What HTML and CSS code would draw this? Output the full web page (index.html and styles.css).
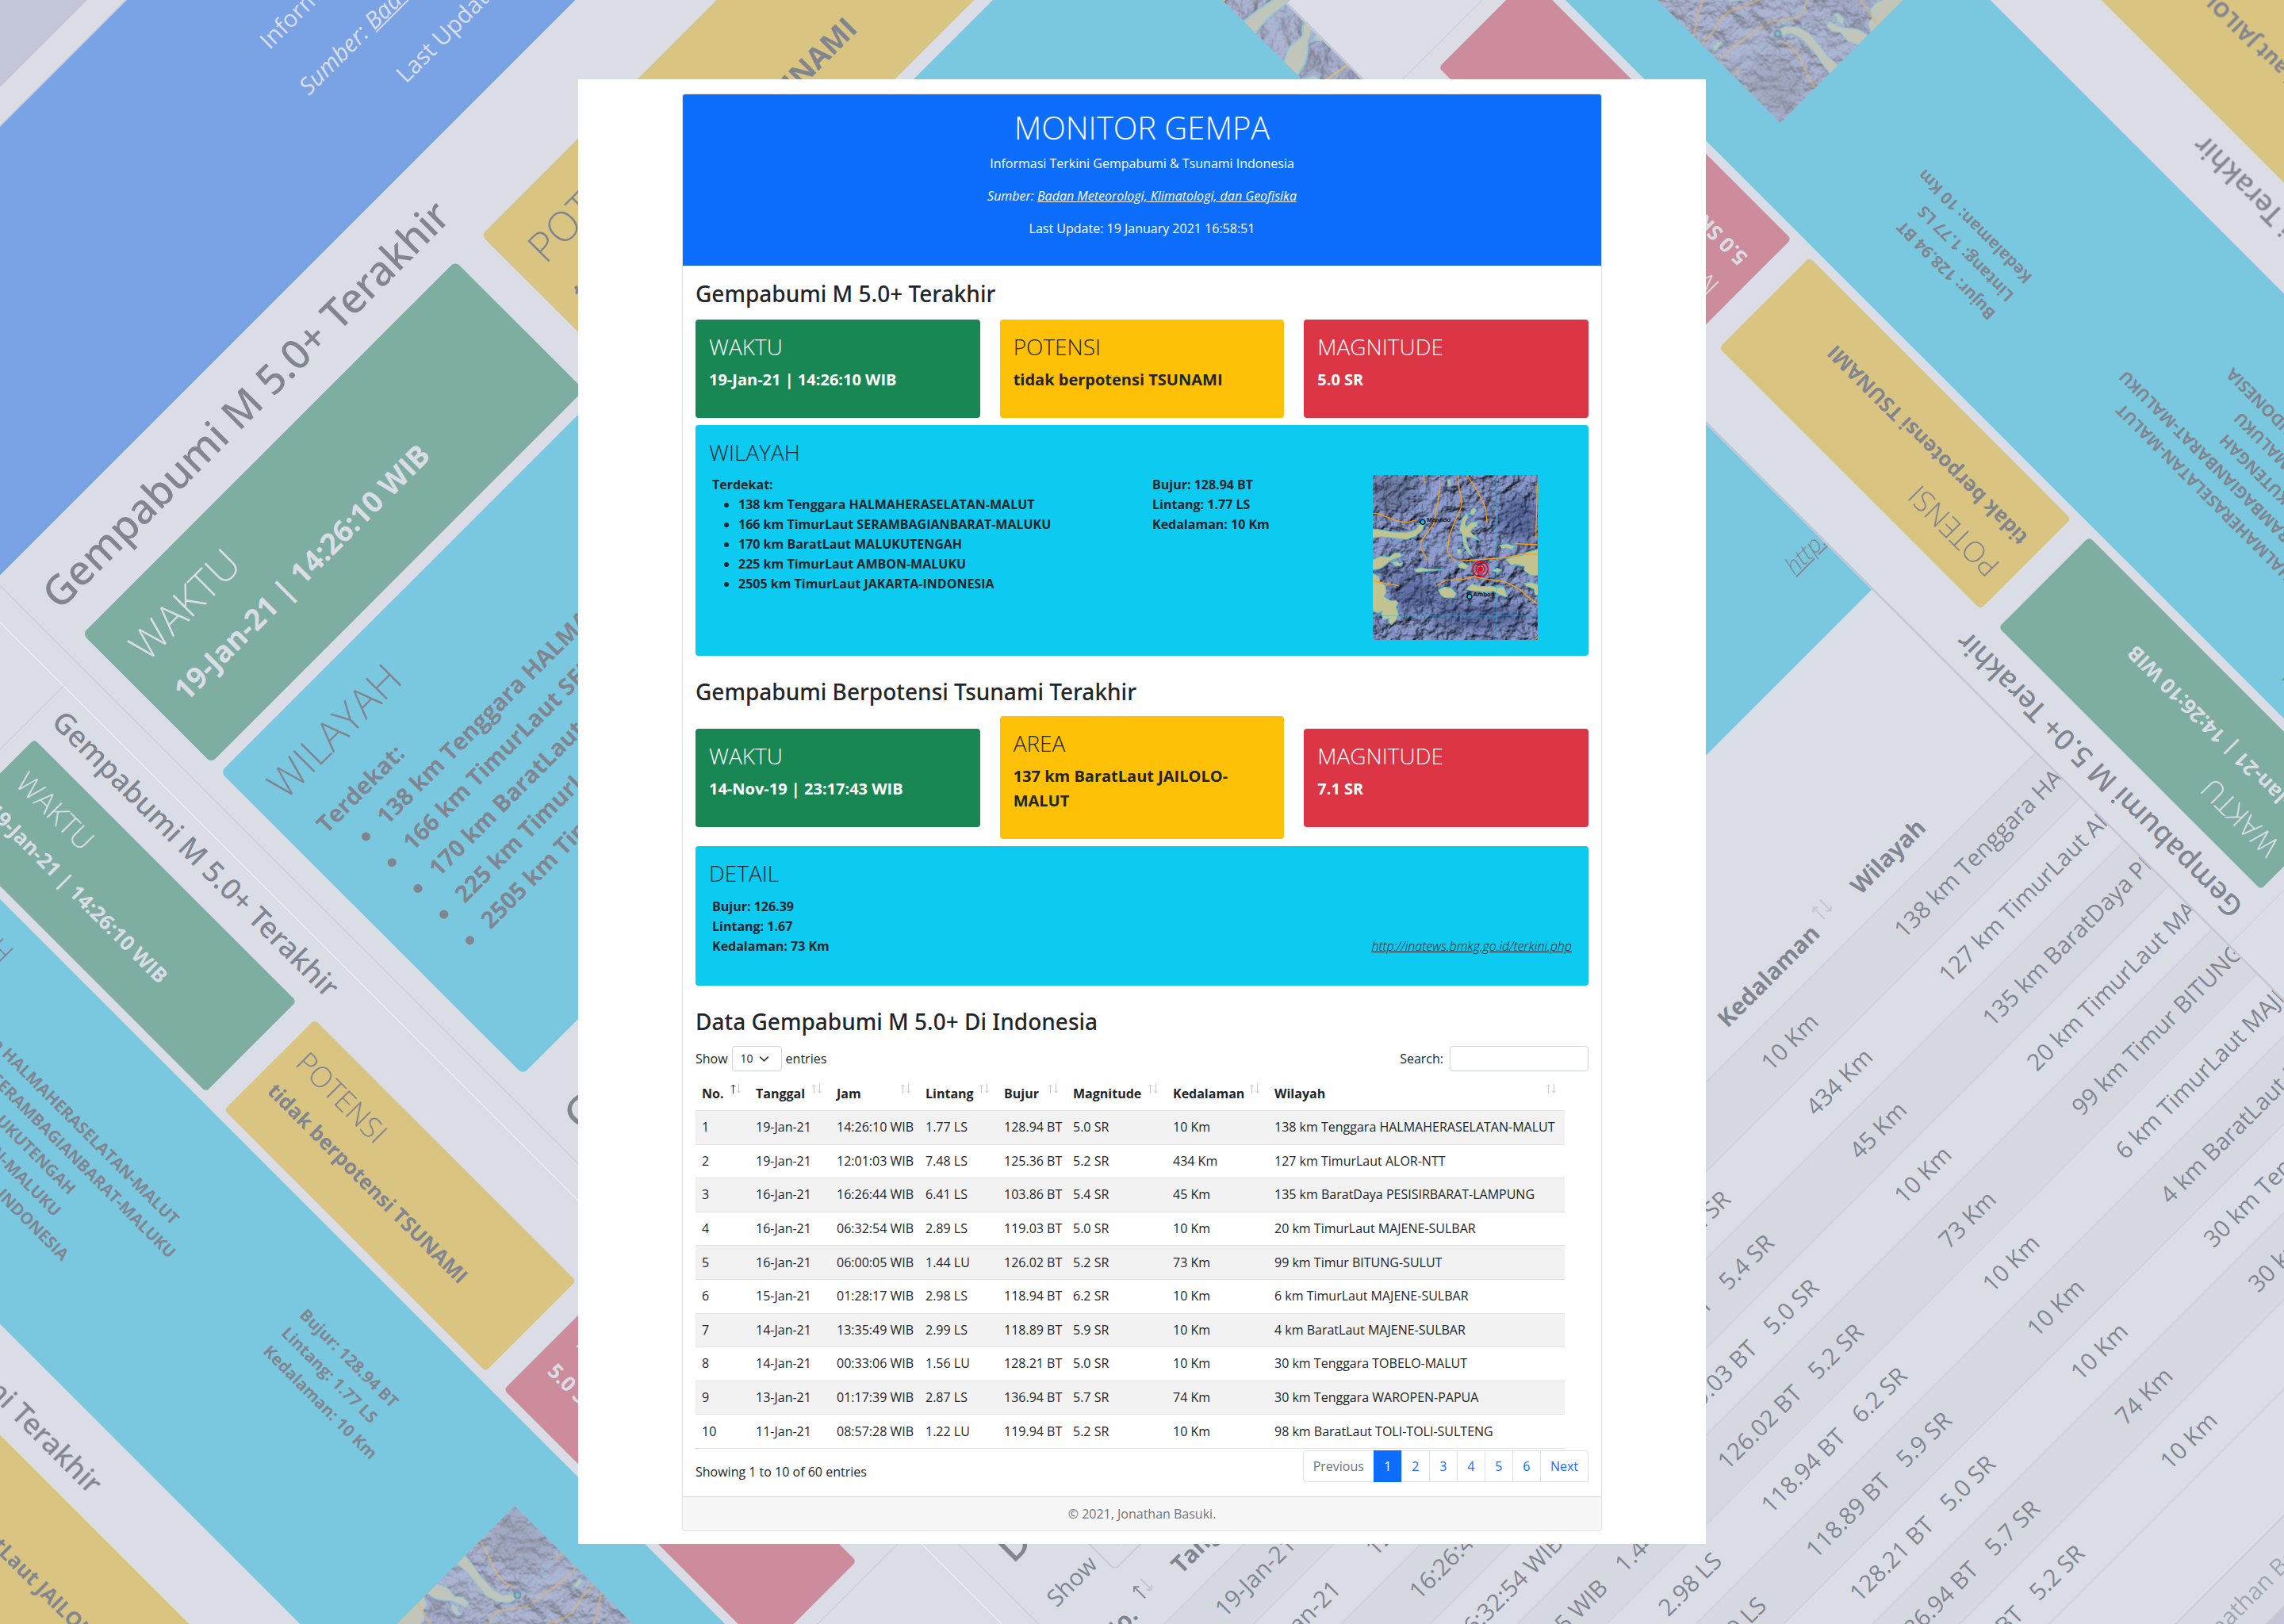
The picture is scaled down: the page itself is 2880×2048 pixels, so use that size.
FILE: index.html
```html
<!DOCTYPE html>
<html lang="id">
<head>
<meta charset="utf-8">
<meta name="viewport" content="width=device-width, initial-scale=1">
<title>Monitor Gempa</title>
<link rel="stylesheet" href="styles.css">
</head>
<body>

<svg class="defs" width="0" height="0" aria-hidden="true">
  <defs>
    <filter id="relief" x="0" y="0" width="1" height="1" color-interpolation-filters="sRGB">
      <feTurbulence type="fractalNoise" baseFrequency=".026 .026" numOctaves="4" seed="11" result="n"/>
      <feColorMatrix in="n" type="matrix" values="0 0 0 0 0  0 0 0 0 0  0 0 0 0 0  1 0 0 0 0"/>
      <feDiffuseLighting surfaceScale="17" diffuseConstant="1.1" lighting-color="#8290c0">
        <feDistantLight azimuth="225" elevation="58"/>
      </feDiffuseLighting>
    </filter>
    <filter id="soft"><feGaussianBlur stdDeviation="22"/></filter>
  </defs>
  <symbol id="sort" viewBox="0 0 14 12">
    <path class="up" d="M3.5 12V1M1 3.5 3.5 1 6 3.5"/>
    <path class="down" d="M10.500 0V11M8 8.500 10.500 11 13 8.500"/>
  </symbol>
  <symbol id="map" viewBox="24 24 624 624">
    <rect x="24" y="24" width="624" height="624" fill="#7380ae"/>
    <rect x="24" y="24" width="624" height="624" filter="url(#relief)"/>
    <g fill="#27376f" filter="url(#soft)" opacity=".42">
      <path d="M24 24H190L180 150 110 160 24 140z" fill="#46546f"/>
      <ellipse cx="180" cy="480" rx="90" ry="60"/>
      <ellipse cx="580" cy="190" rx="80" ry="90"/>
      <ellipse cx="120" cy="395" rx="190" ry="14"/>
      <ellipse cx="430" cy="560" rx="190" ry="50"/>
      <ellipse cx="300" cy="490" rx="60" ry="22"/>
    </g>
    <g fill="#9aa9dc" filter="url(#soft)" opacity=".5">
      <ellipse cx="250" cy="110" rx="34" ry="100"/>
      <ellipse cx="290" cy="300" rx="70" ry="60"/>
      <ellipse cx="560" cy="330" rx="90" ry="30"/>
      <ellipse cx="90" cy="290" rx="70" ry="18"/>
    </g>
    <g fill="#c3c390" stroke="#4cc8d2" stroke-width="3" stroke-linejoin="round">
      <path d="M22 228 60 232 100 240 150 242 185 232 205 206 217 212 212 232 186 256 150 268 100 262 60 258 22 262z"/>
      <path d="M22 345 50 332 88 334 104 320 128 318 132 334 108 340 88 350 70 366 50 378 22 384z"/>
      <path d="M22 396 48 408 50 428 72 442 74 470 66 484 92 500 112 498 120 508 112 524 122 552 112 572 96 590 84 582 86 566 64 572 56 550 62 538 40 546 22 534z"/>
      <path d="M98 356 116 350 124 358 138 356 130 368 108 368zM182 380 208 374 230 380 288 382 230 388 196 392 184 388z"/>
      <path d="M396 156 408 146 416 158 404 176 392 172zM362 190 380 168 384 184 374 204 376 222 396 204 418 200 420 216 400 228 392 240 430 272 396 260 376 258 382 290 404 334 384 318 368 288 362 250 352 232z"/>
      <path d="M342 304 358 306 356 328 344 320zM306 40 318 40 320 62 310 68zM346 362 362 354 388 368 374 380 350 374zM474 384 494 376 512 384 494 394z"/>
      <path d="M504 290 530 284 560 294 552 306 528 300 512 302z"/>
      <path d="M528 344 552 334 590 328 604 318 650 304V404L622 404 596 384 598 370 566 362 546 364z"/>
      <path d="M594 434 622 430 650 440V480L638 478 634 456 606 444z"/>
      <path d="M272 458 294 448 320 452 340 472 332 488 296 488 280 476z"/>
      <path d="M376 456 400 436 434 446 466 444 498 450 520 448 534 486 506 478 482 464 440 466 396 462z"/>
    </g>
    <g stroke="#19b7dd" stroke-width="2" opacity=".65">
      <path d="M218 24V648M491 24V648M24 284H648M24 557H648"/>
    </g>
    <g class="fault">
      <path d="M24 169 50 172 90 188 124 200 160 203 186 194"/>
      <path d="M217 24 220 54M24 425 60 432 122 443"/>
      <path d="M277 24 278 74" stroke-dasharray="9 4"/>
      <path d="M278 74 270 128 254 210 228 244 206 276 206 300 218 324 234 348"/>
      <path d="M348 24 350 74 360 112 358 148 334 200 314 252 306 314 334 350 430 344 530 336 600 323 648 325"/>
      <path d="M380 24 420 84 450 146 456 204M646 58 641 262M562 284 648 288"/>
      <path d="M268 441 302 422 370 418 404 408 440 416 524 428 576 454 630 500 648 512M638 646 648 636"/>
    </g>
    <g fill="none" stroke="#f00514" stroke-width="5">
      <circle cx="431" cy="380" r="29"/><circle cx="431" cy="380" r="16"/><circle cx="431" cy="380" r="7" fill="#f00514"/>
    </g>
    <g fill="#12c3e6" stroke="#071820" stroke-width="4"><circle cx="213" cy="202" r="9"/><circle cx="390" cy="484" r="9"/></g>
    <text class="place" x="228" y="202">Manado</text>
    <text class="place" x="403" y="484">Ambon</text>
  </symbol>
</svg>

<div class="backdrop" aria-hidden="true" inert>
  <div class="copies">
    <div class="copy copy-mid"></div>
    <div class="copy copy-large"></div>
    <div class="copy copy-turned"></div>
  </div>
  <div class="seam"></div>
</div>

<main class="panel">
  <article class="card">
    <header class="card-header">
      <h1>MONITOR GEMPA</h1>
      <p>Informasi Terkini Gempabumi &amp; Tsunami Indonesia</p>
      <p><em>Sumber: <a href="#bmkg">Badan Meteorologi, Klimatologi, dan Geofisika</a></em></p>
      <p>Last Update: 19 January 2021 16:58:51</p>
    </header>

    <div class="card-body">
      <section>
        <h2>Gempabumi M 5.0+ Terakhir</h2>
        <div class="tiles">
          <div class="tile green"><h3>WAKTU</h3><p>19-Jan-21 | 14:26:10 WIB</p></div>
          <div class="tile yellow"><h3>POTENSI</h3><p>tidak berpotensi TSUNAMI</p></div>
          <div class="tile red"><h3>MAGNITUDE</h3><p>5.0 SR</p></div>
        </div>
        <div class="tile cyan">
          <h3>WILAYAH</h3>
          <div class="facts region">
            <div>Terdekat:
              <ul>
                <li>138 km Tenggara HALMAHERASELATAN-MALUT</li>
                <li>166 km TimurLaut SERAMBAGIANBARAT-MALUKU</li>
                <li>170 km BaratLaut MALUKUTENGAH</li>
                <li>225 km TimurLaut AMBON-MALUKU</li>
                <li>2505 km TimurLaut JAKARTA-INDONESIA</li>
              </ul>
            </div>
            <div>Bujur: 128.94 BT<br>Lintang: 1.77 LS<br>Kedalaman: 10 Km</div>
            <svg class="map" role="img" aria-label="Peta lokasi gempa"><use href="#map"/></svg>
          </div>
        </div>
      </section>

      <section>
        <h2>Gempabumi Berpotensi Tsunami Terakhir</h2>
        <div class="tiles">
          <div class="tile green"><h3>WAKTU</h3><p>14-Nov-19 | 23:17:43 WIB</p></div>
          <div class="tile yellow"><h3>AREA</h3><p>137 km BaratLaut JAILOLO-MALUT</p></div>
          <div class="tile red"><h3>MAGNITUDE</h3><p>7.1 SR</p></div>
        </div>
        <div class="tile cyan">
          <h3>DETAIL</h3>
          <div class="facts detail">
            <div>Bujur: 126.39<br>Lintang: 1.67<br>Kedalaman: 73 Km</div>
            <a href="#terkini">http://inatews.bmkg.go.id/terkini.php</a>
          </div>
        </div>
      </section>

      <section>
        <h2>Data Gempabumi M 5.0+ Di Indonesia</h2>
        <div class="controls">
          <label class="length">Show <select><option>10</option><option>25</option><option>50</option></select> entries</label>
          <label>Search: <input type="search"></label>
        </div>
        <table>
          <colgroup><col class="c-no"><col class="c-date"><col class="c-time"><col class="c-lat"><col class="c-lon"><col class="c-mag"><col class="c-depth"><col></colgroup>
          <thead>
            <tr>
              <th class="sorted"><span>No.<svg><use href="#sort"/></svg></span></th>
              <th><span>Tanggal<svg><use href="#sort"/></svg></span></th>
              <th><span>Jam<svg><use href="#sort"/></svg></span></th>
              <th><span>Lintang<svg><use href="#sort"/></svg></span></th>
              <th><span>Bujur<svg><use href="#sort"/></svg></span></th>
              <th><span>Magnitude<svg><use href="#sort"/></svg></span></th>
              <th><span>Kedalaman<svg><use href="#sort"/></svg></span></th>
              <th><span>Wilayah<svg><use href="#sort"/></svg></span></th>
            </tr>
          </thead>
          <tbody>
            <tr><td>1</td><td>19-Jan-21</td><td>14:26:10 WIB</td><td>1.77 LS</td><td>128.94 BT</td><td>5.0 SR</td><td>10 Km</td><td>138 km Tenggara HALMAHERASELATAN-MALUT</td></tr>
            <tr><td>2</td><td>19-Jan-21</td><td>12:01:03 WIB</td><td>7.48 LS</td><td>125.36 BT</td><td>5.2 SR</td><td>434 Km</td><td>127 km TimurLaut ALOR-NTT</td></tr>
            <tr><td>3</td><td>16-Jan-21</td><td>16:26:44 WIB</td><td>6.41 LS</td><td>103.86 BT</td><td>5.4 SR</td><td>45 Km</td><td>135 km BaratDaya PESISIRBARAT-LAMPUNG</td></tr>
            <tr><td>4</td><td>16-Jan-21</td><td>06:32:54 WIB</td><td>2.89 LS</td><td>119.03 BT</td><td>5.0 SR</td><td>10 Km</td><td>20 km TimurLaut MAJENE-SULBAR</td></tr>
            <tr><td>5</td><td>16-Jan-21</td><td>06:00:05 WIB</td><td>1.44 LU</td><td>126.02 BT</td><td>5.2 SR</td><td>73 Km</td><td>99 km Timur BITUNG-SULUT</td></tr>
            <tr><td>6</td><td>15-Jan-21</td><td>01:28:17 WIB</td><td>2.98 LS</td><td>118.94 BT</td><td>6.2 SR</td><td>10 Km</td><td>6 km TimurLaut MAJENE-SULBAR</td></tr>
            <tr><td>7</td><td>14-Jan-21</td><td>13:35:49 WIB</td><td>2.99 LS</td><td>118.89 BT</td><td>5.9 SR</td><td>10 Km</td><td>4 km BaratLaut MAJENE-SULBAR</td></tr>
            <tr><td>8</td><td>14-Jan-21</td><td>00:33:06 WIB</td><td>1.56 LU</td><td>128.21 BT</td><td>5.0 SR</td><td>10 Km</td><td>30 km Tenggara TOBELO-MALUT</td></tr>
            <tr><td>9</td><td>13-Jan-21</td><td>01:17:39 WIB</td><td>2.87 LS</td><td>136.94 BT</td><td>5.7 SR</td><td>74 Km</td><td>30 km Tenggara WAROPEN-PAPUA</td></tr>
            <tr><td>10</td><td>11-Jan-21</td><td>08:57:28 WIB</td><td>1.22 LU</td><td>119.94 BT</td><td>5.2 SR</td><td>10 Km</td><td>98 km BaratLaut TOLI-TOLI-SULTENG</td></tr>
          </tbody>
        </table>
        <div class="table-foot">
          <p>Showing 1 to 10 of 60 entries</p>
          <nav class="pages">
            <span class="off">Previous</span><a class="current" href="#p1">1</a><a href="#p2">2</a><a href="#p3">3</a><a href="#p4">4</a><a href="#p5">5</a><a href="#p6">6</a><a href="#next">Next</a>
          </nav>
        </div>
      </section>
    </div>

    <footer>© 2021, Jonathan Basuki.</footer>
  </article>
</main>

<script src="backdrop.js"></script>
</body>
</html>
```
FILE: styles.css
```css
* { box-sizing: border-box; }

body {
  margin: 0;
  background: #c2c6d6;
  color: #212529;
  font: 400 16px/25px "Open Sans", "Noto Sans", sans-serif;
}

h1, h2, h3, p, ul { margin: 0; }
.defs { position: absolute; }

/* Rotated copies of the card behind the page */
.backdrop { position: fixed; inset: 0; overflow: hidden; }
.copies { position: absolute; inset: 0; opacity: .4; }
.copy {
  position: absolute;
  left: 0;
  top: 0;
  width: 1422px;
  padding: 18px 131px 16px;
  background: #fff;
  transform-origin: 0 0;
}
.copy-mid { transform: translate(186px, 517px) rotate(45deg) scale(1.302); }
.copy-large {
  width: 1192px;
  padding: 18px 16px 0;
  transform: translate(-336px, 446px) rotate(-45deg) scale(1.852);
}
.copy-turned {
  transform: translate(2708px, 1537px) rotate(225deg) scale(1.302);
  clip-path: inset(242px 0 0 0);
}
.copy-turned::before {
  content: "";
  position: absolute;
  inset: 242px 0 auto;
  height: 2px;
  background: #c3c5d7;
}
.seam {
  position: absolute;
  left: 0;
  top: 784px;
  width: 1800px;
  height: 1px;
  background: rgba(255, 255, 255, .6);
  transform-origin: 0 0;
  transform: rotate(45deg);
}

.panel {
  position: relative;
  max-width: 1422px;
  margin: 100px auto;
  padding: 18px 131px 16px;
  background: #fff;
}

.card {
  background: #fff;
  border: 1px solid rgba(0, 0, 0, .125);
  border-radius: 4px;
}
.card-header {
  padding: 17px 16px;
  background: #0d6efd;
  border-bottom: 1px solid rgba(0, 0, 0, .125);
  border-radius: 3px 3px 0 0;
  color: #fff;
  text-align: center;
}
.card-header h1 { margin-bottom: 8px; font-size: 40px; line-height: 50px; font-weight: 300; }
.card-header p { margin-bottom: 16px; }
.card-header a { color: inherit; }
.card-body { padding: 18px 16px 18px; }

section + section { margin-top: 28px; }
h2 { margin-bottom: 15px; font: 500 28px/35px "Noto Sans", sans-serif; }
section + section h2 { margin-bottom: 13px; }

.tiles { display: grid; grid-template-columns: repeat(3, 1fr); align-items: center; gap: 25px; margin-bottom: 9px; }
.tile { padding: 17px; border-radius: 4px; }
.tile h3 { margin-bottom: 8px; font-size: 28px; line-height: 35px; font-weight: 300; }
.tile p { margin-bottom: 16px; font-size: 20px; line-height: 31px; font-weight: 700; }
.green { background: #198754; color: #fff; }
.yellow { background: #ffc107; }
.red { background: #dc3545; color: #fff; }
.cyan { background: #0dcaf0; }

.facts { padding: 3px 4px; font-weight: 700; }
.region { display: grid; grid-template-columns: 555fr 278fr 251fr; }
.facts ul { padding-left: 33px; }
.map { display: block; width: 208px; height: 208px; }
.fault { fill: none; stroke: #ff9f0a; stroke-width: 4; }
.place { font: 700 24px "Liberation Sans", sans-serif; fill: #111; }
.detail { display: flex; justify-content: space-between; align-items: flex-end; margin-bottom: 16px; padding: 4px; }
.detail a { color: inherit; font-weight: 300; font-style: italic; }

.controls { display: flex; justify-content: space-between; padding-bottom: 8px; }
.controls label { display: flex; align-items: center; gap: 8px; }
.controls .length { gap: 5px; }
.controls select, .controls input {
  height: 32px;
  background: #fff;
  border: 1px solid #ced4da;
  border-radius: 4px;
  color: inherit;
  font: 400 14px/20px "Open Sans", sans-serif;
}
.controls select {
  width: 63px;
  padding: 0 10px;
  appearance: none;
  background: #fff url("data:image/svg+xml,%3Csvg xmlns='http://www.w3.org/2000/svg' viewBox='0 0 16 16'%3E%3Cpath fill='none' stroke='%23343a40' stroke-linecap='round' stroke-linejoin='round' stroke-width='2' d='M2 5l6 6 6-6'/%3E%3C/svg%3E") right 15px center / 13px no-repeat;
}
.controls input { width: 175px; padding: 0 8px; }

table { width: 97.3%; height: 468px; border-collapse: collapse; table-layout: fixed; }
.c-no { width: 68px; }
.c-date { width: 102px; }
.c-time { width: 112px; }
.c-lat { width: 99px; }
.c-lon { width: 87px; }
.c-mag { width: 126px; }
.c-depth { width: 128px; }
th, td { padding: 8px; border-bottom: 1px solid #dee2e6; text-align: left; white-space: nowrap; }
tbody tr:nth-child(odd) { background: #f2f2f2; }
th span { display: flex; justify-content: space-between; padding-right: 2px; }
th svg { width: 14px; height: 12px; fill: none; stroke: #c4c6c8; --up: #c4c6c8; }
.sorted svg { --up: #212529; }
.up { stroke: var(--up); }

.table-foot { display: flex; justify-content: space-between; align-items: flex-end; padding-top: 2px; }
.pages { display: flex; }
.pages > * {
  min-width: 36px;
  height: 40px;
  margin-left: -1px;
  padding: 7px 12px;
  border: 1px solid #dee2e6;
  color: #0d6efd;
  text-align: center;
  text-decoration: none;
}
.pages .off { color: #6c757d; border-radius: 4px 0 0 4px; }
.pages .current { background: #0d6efd; border-color: #0d6efd; color: #fff; }
.pages > :last-child { border-radius: 0 4px 4px 0; }

footer {
  padding: 9px 16px 8px;
  background: #f7f7f7;
  border-top: 1px solid rgba(0, 0, 0, .125);
  color: #6c757d;
  text-align: center;
}
```
FILE: backdrop.js
```js
// Fill each backdrop layer with a copy of the card.
const card = document.querySelector(".panel .card");
for (const layer of document.querySelectorAll(".copy")) {
  layer.append(card.cloneNode(true));
}
```
